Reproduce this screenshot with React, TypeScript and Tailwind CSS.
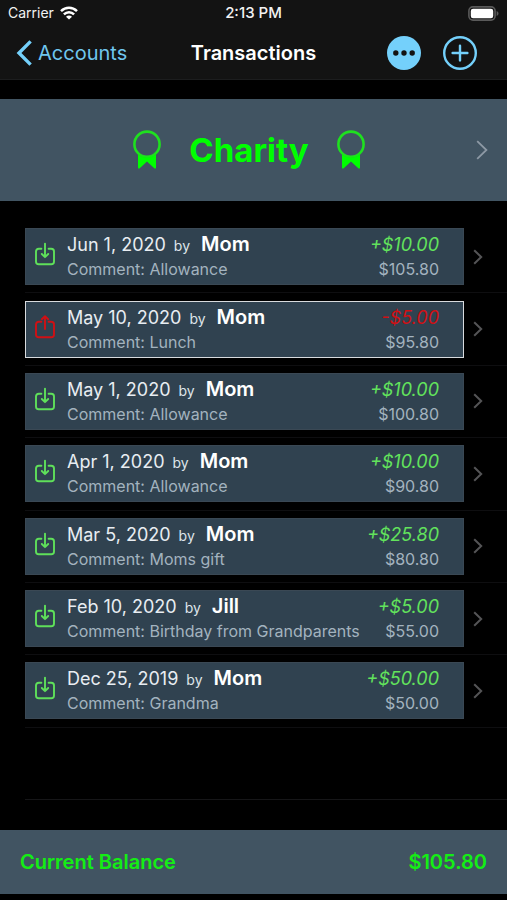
type Transaction = {
  date: string;
  by: string;
  comment: string;
  amount: string;
  balance: string;
  selected?: boolean;
};

const transactions: Transaction[] = [
  { date: "Jun 1, 2020", by: "Mom", comment: "Allowance", amount: "+$10.00", balance: "$105.80" },
  { date: "May 10, 2020", by: "Mom", comment: "Lunch", amount: "-$5.00", balance: "$95.80", selected: true },
  { date: "May 1, 2020", by: "Mom", comment: "Allowance", amount: "+$10.00", balance: "$100.80" },
  { date: "Apr 1, 2020", by: "Mom", comment: "Allowance", amount: "+$10.00", balance: "$90.80" },
  { date: "Mar 5, 2020", by: "Mom", comment: "Moms gift", amount: "+$25.80", balance: "$80.80" },
  { date: "Feb 10, 2020", by: "Jill", comment: "Birthday from Grandparents", amount: "+$5.00", balance: "$55.00" },
  { date: "Dec 25, 2019", by: "Mom", comment: "Grandma", amount: "+$50.00", balance: "$50.00" },
];

function WifiIcon() {
  return (
    <svg width="18" height="14" viewBox="0 0 18 14" fill="none" stroke="#fff" strokeWidth="2.5" aria-hidden="true">
      <path d="M1 5.2C5.6 0.7 12.4 0.7 17 5.2" />
      <path d="M3.9 8.3C6.8 5.4 11.2 5.4 14.1 8.3" />
      <path d="M9 13.6L6 10.7C7.7 9 10.3 9 12 10.7Z" fill="#fff" stroke="none" />
    </svg>
  );
}

function BatteryIcon() {
  return (
    <svg width="31" height="15" viewBox="0 0 31 15" aria-hidden="true">
      <rect x="0.9" y="0.9" width="26.2" height="13.2" rx="4" fill="none" stroke="#5a5a5a" strokeWidth="1.6" />
      <rect x="2.8" y="2.8" width="22.4" height="9.4" rx="2.2" fill="#fff" />
      <path d="M28.6 5V10C29.8 9.6 30.5 8.7 30.5 7.5S29.8 5.4 28.6 5Z" fill="#5a5a5a" />
    </svg>
  );
}

function RibbonIcon() {
  return (
    <svg width="28" height="40" viewBox="0 0 28 40" aria-hidden="true">
      <circle cx="14" cy="14.2" r="12.6" fill="none" stroke="#1fe01f" strokeWidth="2.6" />
      <path d="M5 24.6C10.5 28.6 17.5 28.6 23 24.6V37.6C23 38.8 22 39 21.3 38.3L14 31.4L6.7 38.3C6 39 5 38.8 5 37.6Z" fill="#00ff00" />
    </svg>
  );
}

function TrayIcon({ out }: { out?: boolean }) {
  return (
    <svg
      width="20"
      height="28"
      viewBox="0 0 20 28"
      fill="none"
      stroke={out ? "#d01014" : "#5fe05a"}
      strokeWidth="1.9"
      strokeLinecap="round"
      strokeLinejoin="round"
      aria-hidden="true"
    >
      <path d="M6.4 6.8H3.8C2 6.8 1 7.8 1 9.6V19.4C1 21.2 2 22.2 3.8 22.2H16.2C18 22.2 19 21.2 19 19.4V9.6C19 7.8 18 6.8 16.2 6.8H13.6" />
      {out ? <path d="M10 14V1.4M6.8 4.2L10 1.2L13.2 4.2" /> : <path d="M10 1.6V15M6.8 12L10 15.2L13.2 12" />}
    </svg>
  );
}

function Chevron({ large }: { large?: boolean }) {
  return large ? (
    <svg width="12" height="20" viewBox="0 0 12 20" fill="none" stroke="#8d99a5" strokeWidth="1.8" aria-hidden="true">
      <path d="M1.2 1.2L10.4 10L1.2 18.8" />
    </svg>
  ) : (
    <svg width="10" height="16" viewBox="0 0 10 16" fill="none" stroke="#545456" strokeWidth="2" aria-hidden="true">
      <path d="M1.2 1.2L8.2 8L1.2 14.8" />
    </svg>
  );
}

function TransactionRow({ item }: { item: Transaction }) {
  const out = item.amount.startsWith("-");
  return (
    <li className="ml-[25px] border-b border-[#0e0e10]">
      <a href="#transaction" className="flex h-full items-center gap-[9px] pr-6">
        <div
          className={`flex min-w-0 flex-1 items-center gap-3 border bg-[#304250] pt-[2px] pr-6 pb-[3px] pl-[9px] ${
            item.selected ? "border-[#d8dbde]" : "border-[#3a4854]"
          }`}
        >
          <TrayIcon out={out} />
          <div className="min-w-0 flex-1">
            <div className="flex h-[26px] items-baseline">
              <span className="text-[18px] leading-[26px] text-[#e8edf2]">{item.date}</span>
              <span className="ml-2 text-[14px] leading-[26px] text-[#dfe5ea]">by</span>
              <span className="ml-[11px] text-[20px] leading-[26px] font-semibold text-white">{item.by}</span>
              <span
                className={`ml-auto text-[18px] leading-[26px] italic ${out ? "text-[#d01014]" : "text-[#62e35c]"}`}
              >
                {item.amount}
              </span>
            </div>
            <div className="flex justify-between text-[16px] leading-[24px] text-[#a3b3bf]">
              <span>Comment: {item.comment}</span>
              <span>{item.balance}</span>
            </div>
          </div>
        </div>
        <Chevron />
      </a>
    </li>
  );
}

export default function App() {
  return (
    <div className="flex min-h-screen flex-col bg-black font-[Inter,'Liberation_Sans',sans-serif] whitespace-nowrap">
      <header className="border-b border-[#1c1d1e] bg-[#131313]">
        <div className="grid h-[26px] grid-cols-[1fr_auto_1fr] items-center px-2 text-[14px] leading-[20px] text-[#f2f2f2]">
          <div className="flex items-center gap-[6px]">
            <span>Carrier</span>
            <WifiIcon />
          </div>
          <span className="text-[15px] font-medium">2:13 PM</span>
          <div className="flex justify-end">
            <BatteryIcon />
          </div>
        </div>
        <nav className="grid h-[53px] grid-cols-[1fr_auto_1fr] items-center px-4">
          <a href="#accounts" className="flex items-center gap-[6px] text-[20px] leading-[26px] text-[#6fc6ee]">
            <svg width="16" height="26" viewBox="0 0 16 26" fill="none" stroke="#74d0fb" strokeWidth="3.4" aria-hidden="true">
              <path d="M14.6 1.4L3 13L14.6 24.6" />
            </svg>
            Accounts
          </a>
          <h1 className="text-[20px] leading-[26px] font-semibold text-white">Transactions</h1>
          <div className="flex justify-end gap-[22px] pr-[14px]">
            <button type="button" aria-label="More options">
              <svg width="34" height="34" viewBox="0 0 34 34" aria-hidden="true">
                <circle cx="17" cy="17" r="17" fill="#74d0fb" />
                <circle cx="8.8" cy="17" r="2.7" fill="#131313" />
                <circle cx="17" cy="17" r="2.7" fill="#131313" />
                <circle cx="25.2" cy="17" r="2.7" fill="#131313" />
              </svg>
            </button>
            <button type="button" aria-label="Add transaction">
              <svg width="34" height="34" viewBox="0 0 34 34" fill="none" stroke="#74d0fb" strokeWidth="2.4" strokeLinecap="round" aria-hidden="true">
                <circle cx="17" cy="17" r="15.8" />
                <path d="M17 9.6V24.4M9.6 17H24.4" />
              </svg>
            </button>
          </div>
        </nav>
      </header>

      <a href="#charity" className="mt-[19px] flex h-[102px] items-center bg-[#415462] pr-[19px] pl-[22px]">
        <div className="flex flex-1 items-center justify-center gap-7">
          <RibbonIcon />
          <h2 className="text-[33px] leading-[40px] font-bold text-[#00ff00]">Charity</h2>
          <RibbonIcon />
        </div>
        <Chevron large />
      </a>

      <main className="mt-5 flex flex-1 flex-col">
        <ul className="grid flex-1 grid-rows-8">
          {transactions.map((item) => (
            <TransactionRow key={item.date} item={item} />
          ))}
          <li className="ml-[25px] border-b border-[#161618]" aria-hidden="true" />
        </ul>
      </main>

      <footer className="mt-[30px] mb-[6px] flex h-16 items-center justify-between bg-[#415462] px-5 text-[20px] leading-[26px] font-semibold text-[#14ee14]">
        <span>Current Balance</span>
        <span>$105.80</span>
      </footer>
    </div>
  );
}
